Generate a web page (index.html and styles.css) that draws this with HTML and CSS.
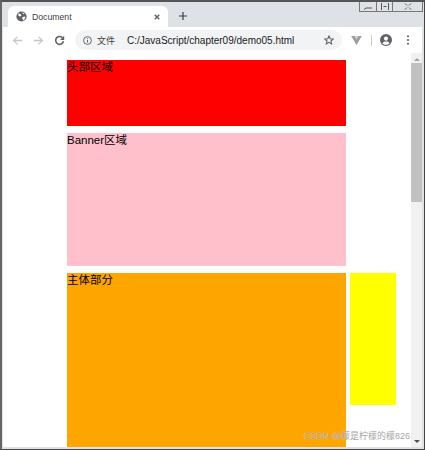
FILE: index.html
```html
<!DOCTYPE html>
<html lang="zh-CN">
<head>
  <meta charset="UTF-8">
  <meta name="viewport" content="width=device-width, initial-scale=1.0">
  <title>Document</title>
  <link rel="stylesheet" href="styles.css">
</head>
<body>
<div class="window">
  <div class="win-controls">
    <span class="win-btn"><svg width="14" height="9" viewBox="0 0 14 9"><path d="M3 7.5l2-1.500h6" stroke="#555" fill="none"/></svg></span>
    <span class="win-btn"><svg width="14" height="9" viewBox="0 0 14 9"><path d="M3.500 1v7M10.500 1v7M5.500 4.500h3" stroke="#555" fill="none"/></svg></span>
    <span class="win-btn win-close"><svg width="14" height="9" viewBox="0 0 14 9"><path d="M4 1.500l2 2M10 1.500l-2 2M4 7.500l2-2M10 7.500l-2-2" stroke="#555" fill="none"/></svg></span>
  </div>

  <div class="tabstrip">
    <div class="tab">
      <svg class="globe" width="11" height="11" viewBox="0 0 14 14"><circle cx="7" cy="7" r="6.500" fill="#5f6368"/><path d="M3 3l3 1 1 2-2 1-2-1zM8 8l3-1 1 1-2 4-2-2zM8 2l3 1-2 1z" fill="#fff"/></svg>
      <span class="tab-title">Document</span>
      <svg class="tab-close" width="6" height="6" viewBox="0 0 8 8"><path d="M1 1l6 6M7 1l-6 6" stroke="#5f6368" stroke-width="2"/></svg>
    </div>
    <svg class="new-tab" width="8" height="8" viewBox="0 0 10 10"><path d="M5 0v10M0 5h10" stroke="#3c4043" stroke-width="1.500"/></svg>
  </div>

  <div class="toolbar">
    <svg class="tool" width="11" height="11" viewBox="0 0 14 14"><path d="M13 7H2M7 2L2 7l5 5" stroke="#c4c6c9" stroke-width="1.600" fill="none"/></svg>
    <svg class="tool" width="11" height="11" viewBox="0 0 14 14"><path d="M1 7h11M7 2l5 5-5 5" stroke="#c4c6c9" stroke-width="1.600" fill="none"/></svg>
    <svg class="tool" width="11" height="11" viewBox="0 0 14 14"><path d="M11.500 4.500A5 5 0 1 0 12 8" stroke="#5f6368" stroke-width="2" fill="none"/><path d="M13 1v5.300H7.700z" fill="#5f6368"/></svg>
    <div class="omnibox">
      <svg width="9" height="9" viewBox="0 0 12 12"><circle cx="6" cy="6" r="5.200" stroke="#5f6368" stroke-width="1.300" fill="none"/><path d="M6 5.200v3.600M6 3v1.200" stroke="#5f6368" stroke-width="1.400"/></svg>
      <span class="scheme">文件</span>
      <span class="url">C:/JavaScript/chapter09/demo05.html</span>
      <svg class="star" width="10" height="10" viewBox="0 0 13 13"><path d="M6.500 1.300l1.600 3.500 3.800.4-2.800 2.600.8 3.800-3.400-2-3.400 2 .8-3.800L1.100 5.200l3.800-.4z" stroke="#5f6368" stroke-width="1.400" fill="none"/></svg>
    </div>
    <svg class="ext" width="11" height="9" viewBox="0 0 13 11"><path d="M0 0h13L6.500 11z" fill="#9a9da1"/><path d="M4 0h5L6.500 4.500z" fill="#d0d2d5"/></svg>
    <span class="divider"></span>
    <svg class="avatar" width="12" height="12" viewBox="0 0 13 13"><circle cx="6.500" cy="6.500" r="6.500" fill="#5f6368"/><circle cx="6.500" cy="5" r="2.200" fill="#fff"/><path d="M2.600 10c1-1.600 2.400-2 3.900-2s2.900.4 3.900 2c-1 1.100-2.400 1.700-3.900 1.700S3.600 11.100 2.600 10z" fill="#fff"/></svg>
    <svg class="menu" width="4" height="10" viewBox="0 0 4 12"><circle cx="2" cy="1.500" r="1.300" fill="#5f6368"/><circle cx="2" cy="6" r="1.300" fill="#5f6368"/><circle cx="2" cy="10.500" r="1.300" fill="#5f6368"/></svg>
  </div>

  <div class="viewport">
    <div class="page">
      <div class="box header-box">头部区域</div>
      <div class="box banner-box">Banner区域</div>
      <div class="content-row">
        <div class="box main-box">主体部分</div>
        <div class="side-box"></div>
      </div>
    </div>
    <div class="scrollbar">
      <span class="arrow-up"></span>
      <span class="thumb"></span>
      <span class="arrow-down"></span>
    </div>
    <div class="watermark">CSDN @檬是柠檬的檬826</div>
  </div>
</div>
</body>
</html>
```

FILE: styles.css
```css
* { box-sizing: border-box; }
html, body { margin: 0; padding: 0; height: 100%; overflow: hidden; background: #fff; }
body { font-family: 'Liberation Sans', 'Noto Sans CJK SC', sans-serif; font-size: 11.5px; color: #000; }

.window { position: relative; display: flex; flex-direction: column; width: 425px; height: 450px; border-top: 2px solid #555; border-left: 2px solid #666; border-right: 1px solid #444; border-bottom: 1px solid #444; }

.win-controls { position: absolute; top: 0; right: 1px; display: flex; height: 10px; border: 1px solid #777; border-top: none; background: #dee1e6; }
.win-btn { display: flex; width: 16px; height: 9px; justify-content: center; border-left: 1px solid #777; }
.win-btn:first-child { border-left: none; }
.win-close { width: 30px; }

.tabstrip { display: flex; align-items: flex-end; height: 25px; padding-left: 6px; background: #dee1e6; }
.tab { display: flex; align-items: center; width: 160px; height: 21px; padding: 0 8px; background: #fff; border-radius: 6px 6px 0 0; }
.globe { flex: none; }
.tab-title { flex: 1; margin-left: 5px; font-size: 8.700px; color: #3c4043; }
.tab-close { flex: none; }
.new-tab { margin: 0 0 7px 11px; }

.toolbar { display: flex; align-items: center; height: 26px; padding-left: 9px; background: #fff; border-left: 1px solid #dee1e6; border-right: 2px solid #dee1e6; }
.tool { flex: none; margin-right: 10px; }
.omnibox { display: flex; flex: none; align-items: center; width: 267px; height: 20px; padding: 0 8px; background: #f1f3f4; border-radius: 10px; }
.scheme { margin-left: 5px; font-size: 9px; color: #3c4043; }
.url { flex: 1; margin-left: 12px; font-size: 10px; color: #202124; white-space: nowrap; }
.star { flex: none; }
.ext { flex: none; margin-left: 9px; }
.divider { flex: none; width: 1px; height: 11px; margin-left: 9px; background: #ccc; }
.avatar { flex: none; margin-left: 8px; }
.menu { flex: none; margin-left: 14px; }

.viewport { position: relative; display: flex; flex: 1; min-height: 0; overflow: hidden; background: #fff; border-left: 1px solid #dee1e6; border-right: 2px solid #dee1e6; border-bottom: 2px solid #dee1e6; }
.page { flex: 1; padding: 7px 0 0 64px; overflow: hidden; }
.box { width: 279px; line-height: 14px; }
.header-box { height: 66px; background: red; }
.banner-box { height: 133px; margin-top: 7px; background: pink; }
.content-row { display: flex; gap: 4px; margin-top: 7px; }
.main-box { flex: none; height: 400px; background: orange; }
.side-box { flex: none; width: 46px; height: 132px; background: #ff0; }

.scrollbar { position: relative; display: flex; flex: none; flex-direction: column; align-items: center; width: 11px; background: #f1f1f1; }
.arrow-up { width: 0; height: 0; margin-top: 5px; border: 3px solid transparent; border-top: none; border-bottom: 3px solid #a3a3a3; }
.thumb { width: 100%; height: 139px; margin-top: 2px; background: #c1c1c1; }
.arrow-down { position: absolute; bottom: 4px; width: 0; height: 0; border: 3px solid transparent; border-bottom: none; border-top: 3px solid #505050; }

.watermark { position: absolute; right: 12px; bottom: 5px; font-size: 9px; color: rgba(150, 150, 150, 0.9); text-shadow: 0 0 1px rgba(255, 255, 255, 0.8); white-space: nowrap; }
```
